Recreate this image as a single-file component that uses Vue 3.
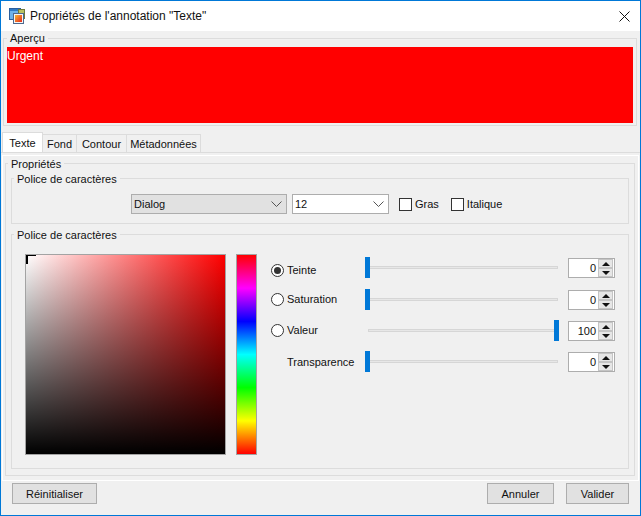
<template>
  <div class="window">
    <div class="titlebar">
      <svg class="app-icon" width="17" height="17" viewBox="0 0 17 17">
        <defs>
          <linearGradient id="iconfill" x1="0" y1="0" x2="1" y2="1">
            <stop offset="0" stop-color="#f7b733" />
            <stop offset="1" stop-color="#e8281c" />
          </linearGradient>
        </defs>
        <rect x="0.5" y="0.5" width="11" height="11" fill="#6db3ec" stroke="#2a5f9e" />
        <rect x="1" y="1" width="10" height="2" fill="#2f78c4" />
        <rect x="9.5" y="1.5" width="6" height="9" fill="#b9c25f" stroke="#6f7a3c" />
        <rect x="4.5" y="5.5" width="10" height="10" fill="#f5f5f5" stroke="#4d6a8f" />
        <rect x="6" y="7" width="7" height="7" fill="url(#iconfill)" />
      </svg>
      <span class="title">Propriétés de l'annotation "Texte"</span>
      <svg class="close" width="11" height="11" viewBox="0 0 11 11">
        <path d="M0.5 0.5 L10.5 10.5 M10.5 0.5 L0.5 10.5" stroke="#111" stroke-width="1" fill="none" />
      </svg>
    </div>

    <div class="content">
      <fieldset class="group preview-group">
        <legend>Aperçu</legend>
        <div class="preview">Urgent</div>
      </fieldset>

      <div class="tabs">
        <div
          v-for="tab in tabs"
          :key="tab"
          class="tab"
          :class="{ active: tab === 'Texte' }"
        >{{ tab }}</div>
      </div>

      <div class="pane">
        <div class="pane-inner">
          <fieldset class="group props">
            <legend>Propriétés</legend>

            <fieldset class="group font-group">
              <legend>Police de caractères</legend>
              <div class="font-row">
                <div class="combo combo-font">
                  <span>Dialog</span>
                  <svg class="chevron" width="11" height="6" viewBox="0 0 11 6">
                    <path d="M0.5 0.5 L5.5 5.5 L10.5 0.5" stroke="#555" fill="none" />
                  </svg>
                </div>
                <div class="combo combo-size">
                  <span>12</span>
                  <svg class="chevron" width="11" height="6" viewBox="0 0 11 6">
                    <path d="M0.5 0.5 L5.5 5.5 L10.5 0.5" stroke="#555" fill="none" />
                  </svg>
                </div>
                <label class="check"><i class="box"></i>Gras</label>
                <label class="check"><i class="box"></i>Italique</label>
              </div>
            </fieldset>

            <fieldset class="group color-group">
              <legend>Police de caractères</legend>
              <div class="color-body">
                <div class="square">
                  <i class="corner"></i>
                </div>
                <div class="hue"></div>
                <div class="sliders">
                  <div v-for="row in rows" :key="row.label" class="slider-row">
                    <span class="radio" :class="{ off: !row.radio, on: row.checked }"></span>
                    <span class="slider-label">{{ row.label }}</span>
                    <div class="slider">
                      <div class="track"></div>
                      <div class="thumb" :style="{ left: thumbLeft(row.value) }"></div>
                    </div>
                    <div class="spinner">
                      <span class="spin-value">{{ row.value }}</span>
                      <div class="spin-buttons">
                        <div class="spin-btn"><i class="up"></i></div>
                        <div class="spin-btn"><i class="down"></i></div>
                      </div>
                    </div>
                  </div>
                </div>
              </div>
            </fieldset>
          </fieldset>
        </div>
      </div>

      <div class="footer">
        <button class="btn btn-reset">Réinitialiser</button>
        <span class="spacer"></span>
        <button class="btn btn-cancel">Annuler</button>
        <button class="btn btn-ok">Valider</button>
      </div>
    </div>
  </div>
</template>

<script setup>
const tabs = ['Texte', 'Fond', 'Contour', 'Métadonnées']

const rows = [
  { label: 'Teinte', value: 0, radio: true, checked: true },
  { label: 'Saturation', value: 0, radio: true, checked: false },
  { label: 'Valeur', value: 100, radio: true, checked: false },
  { label: 'Transparence', value: 0, radio: false, checked: false }
]

const thumbLeft = (value) => `calc((100% - 5px) * ${value / 100})`
</script>

<style>
html,
body {
  margin: 0;
  background: #f0f0f0;
}
</style>

<style scoped>
.window {
  box-sizing: border-box;
  width: 641px;
  height: 516px;
  border: 1px solid #0078d7;
  background: #f0f0f0;
  font-family: "Liberation Sans", Arial, sans-serif;
  font-size: 11px;
  color: #111;
  display: flex;
  flex-direction: column;
}

.titlebar {
  height: 30px;
  flex: none;
  background: #fff;
  display: flex;
  align-items: center;
  padding: 0 10px 0 8px;
}

.app-icon {
  flex: none;
  margin-right: 4px;
}

.title {
  font-size: 12px;
  flex: 1;
}

.close {
  flex: none;
}

.content {
  flex: 1;
  display: flex;
  flex-direction: column;
  min-height: 0;
}

.group {
  border: 1px solid #dcdcdc;
  margin: 0;
  min-width: 0;
  padding: 0;
}

.group legend {
  padding: 0 3px;
  margin-left: 2px;
  height: 12px;
  line-height: 14px;
  white-space: nowrap;
}

.preview-group {
  margin: 1px 3px 0 2px;
  padding: 3px 3px 2px;
}

.preview-group > legend {
  margin-left: 0;
  line-height: 12px;
}

.preview {
  height: 76px;
  background: #ff0000;
  color: #fff;
  font-size: 12px;
  line-height: 19px;
}

.tabs {
  display: flex;
  align-items: flex-end;
  height: 20px;
  margin: 6px 0 0 1px;
}

.tab {
  box-sizing: border-box;
  height: 18px;
  line-height: 18px;
  padding: 0;
  border: 1px solid #dcdcdc;
  border-left: 0;
  border-bottom: 0;
  text-align: center;
}

.tab.active {
  height: 20px;
  line-height: 20px;
  width: 41px;
  background: #fff;
  border-left: 1px solid #dcdcdc;
}

.tab:nth-child(2) {
  width: 34px;
}

.tab:nth-child(3) {
  width: 50px;
}

.tab:nth-child(4) {
  width: 74px;
}

.pane {
  border-top: 1px solid #dcdcdc;
  padding-top: 2px;
}

.pane-inner {
  border: 1px solid #fff;
  margin: 0 1px;
  padding: 1px 3px 4px 2px;
}

.props {
  padding: 3px 5px 6px;
}

.props > legend {
  margin-left: -3px;
}

.font-group {
  height: 50px;
  box-sizing: content-box;
}

.font-row {
  display: flex;
  align-items: flex-start;
  padding: 10px 0 0 119px;
}

.combo {
  box-sizing: border-box;
  height: 20px;
  border: 1px solid #adadad;
  display: flex;
  align-items: center;
  justify-content: space-between;
  padding: 0 4px 0 2px;
}

.combo-font {
  width: 156px;
  background: #e1e1e1;
}

.combo-size {
  width: 97px;
  margin-left: 5px;
  background: #fff;
}

.chevron {
  flex: none;
}

.check {
  display: flex;
  align-items: center;
  height: 20px;
  margin-left: 10px;
}

.check + .check {
  margin-left: 12px;
}

.box {
  width: 11px;
  height: 11px;
  border: 1px solid #333;
  background: #fff;
  margin-right: 3px;
}

.color-group {
  margin-top: 4px;
}

.color-body {
  display: flex;
  align-items: flex-start;
  padding: 14px 0 13px 13px;
}

.square {
  box-sizing: border-box;
  position: relative;
  width: 201px;
  height: 201px;
  border: 1px solid #a3a3a3;
  background: linear-gradient(to bottom, rgba(0, 0, 0, 0), #000), linear-gradient(to right, #fff, #f00);
}

.corner {
  position: absolute;
  left: 0;
  top: 0;
  width: 8px;
  height: 8px;
  border-left: 2px solid #000;
  border-top: 1px solid #000;
}

.hue {
  box-sizing: border-box;
  width: 21px;
  height: 201px;
  margin-left: 10px;
  border: 1px solid #a3a3a3;
  background: linear-gradient(to bottom, #f00, #f0f 16.67%, #00f 33.33%, #0ff 50%, #0f0 66.67%, #ff0 83.33%, #f00);
}

.sliders {
  display: flex;
  flex-direction: column;
  margin: 3px 0 0 14px;
}

.slider-row {
  display: flex;
  align-items: center;
  height: 22px;
  margin-bottom: 9px;
}

.slider-row:first-child {
  margin-bottom: 10px;
}

.slider-row:not(:last-child) .radio,
.slider-row:not(:last-child) .slider-label {
  margin-bottom: 2px;
}

.slider-row:first-child .radio,
.slider-row:first-child .slider-label {
  margin-top: 6px;
}

.radio {
  box-sizing: border-box;
  position: relative;
  width: 13px;
  height: 13px;
  flex: none;
  border: 1px solid #333;
  border-radius: 50%;
  background: #fff;
}

.radio.off {
  visibility: hidden;
}

.radio.on::after {
  content: "";
  position: absolute;
  left: 2px;
  top: 2px;
  width: 7px;
  height: 7px;
  border-radius: 50%;
  background: #333;
}

.slider-label {
  width: 78px;
  flex: none;
  margin-left: 3px;
  white-space: nowrap;
}

.slider {
  position: relative;
  width: 194px;
  height: 22px;
  flex: none;
}

.track {
  position: absolute;
  left: 3px;
  right: 1px;
  top: 9px;
  height: 3px;
  box-sizing: border-box;
  background: #e7e7e7;
  border: 1px solid #d6d6d6;
}

.thumb {
  position: absolute;
  top: 0;
  width: 5px;
  height: 21px;
  background: #0078d7;
}

.spinner {
  box-sizing: border-box;
  width: 47px;
  height: 20px;
  margin-left: 9px;
  border: 1px solid #adadad;
  background: #fff;
  display: flex;
}

.spin-value {
  flex: 1;
  text-align: right;
  line-height: 18px;
  padding-right: 2px;
}

.spin-buttons {
  width: 15px;
  margin: 0 1px 0 0;
  display: flex;
  flex-direction: column;
  gap: 0;
  background: #c4c4c4;
}

.spin-btn {
  flex: 1;
  background: #e6e6e6;
  border: 1px solid #c4c4c4;
  box-sizing: border-box;
  display: flex;
  align-items: center;
  justify-content: center;
}

.up,
.down {
  width: 0;
  height: 0;
  border-left: 4px solid transparent;
  border-right: 4px solid transparent;
}

.up {
  border-bottom: 4px solid #111;
}

.down {
  border-top: 4px solid #111;
}

.footer {
  display: flex;
  align-items: flex-start;
  padding: 2px 11px 0;
}

.spacer {
  flex: 1;
}

.btn {
  box-sizing: border-box;
  height: 21px;
  border: 1px solid #adadad;
  background: #e1e1e1;
  font: inherit;
  color: #111;
  padding: 0;
}

.btn-reset {
  width: 85px;
}

.btn-cancel {
  width: 67px;
}

.btn-ok {
  width: 63px;
  margin-left: 12px;
}
</style>
